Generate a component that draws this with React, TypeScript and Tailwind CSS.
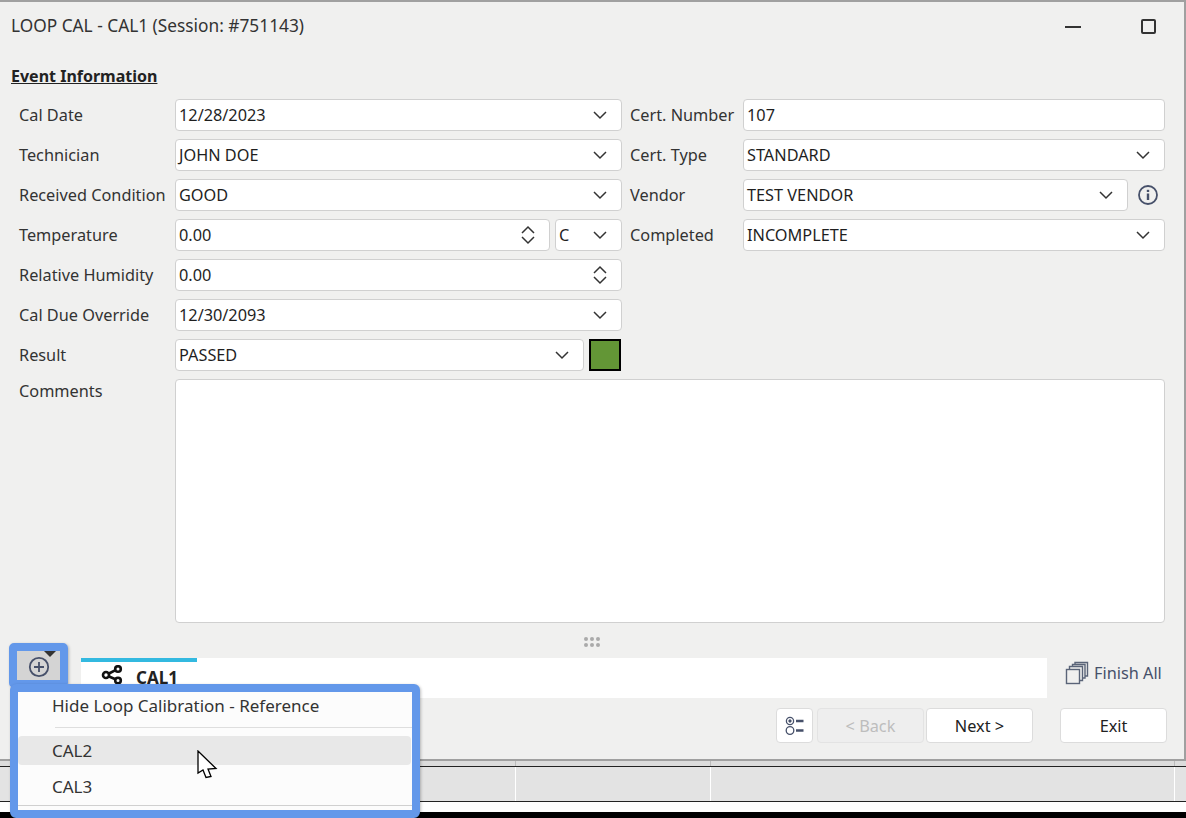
import type { ReactNode } from "react";

const field = "h-[32px] bg-white border border-[#d0d0d0] rounded-[4px] flex items-center pl-[3px] text-[#1f1f1f] min-w-0";

function Chevron() {
  return (
    <svg width="16" height="10" viewBox="0 0 16 10" fill="none" className="shrink-0">
      <path d="M2 2 L8 8 L14 2" stroke="#333" strokeWidth="1.5" />
    </svg>
  );
}

function Spinner() {
  return (
    <svg width="16" height="20" viewBox="0 0 16 20" fill="none" className="shrink-0">
      <path d="M2 8 L8 2 L14 8 M2 12 L8 18 L14 12" stroke="#333" strokeWidth="1.5" />
    </svg>
  );
}

function Select({ value, className = "" }: { value: string; className?: string }) {
  return (
    <div className={`${field} justify-between pr-[13px] ${className}`}>
      <span>{value}</span>
      <Chevron />
    </div>
  );
}

function Spin({ value, className = "" }: { value: string; className?: string }) {
  return (
    <div className={`${field} justify-between pr-[13px] ${className}`}>
      <span>{value}</span>
      <Spinner />
    </div>
  );
}

function Row({ label, children, right }: { label: string; children: ReactNode; right?: ReactNode }) {
  return (
    <div className="flex h-[32px] items-center">
      <div className="w-[156px] shrink-0 text-[#333] whitespace-nowrap">{label}</div>
      <div className="w-[447px] shrink-0 flex items-center">{children}</div>
      {right}
    </div>
  );
}

function Right({ label, children }: { label: string; children: ReactNode }) {
  return (
    <div className="flex items-center flex-1 ml-[8px]">
      <div className="w-[113px] shrink-0 text-[#333] whitespace-nowrap">{label}</div>
      {children}
    </div>
  );
}

function Cursor() {
  return (
    <svg width="22" height="30" viewBox="0 0 22 30" className="absolute left-[196px] top-[750px]">
      <path d="M2 1 L2 23 L7 20 L10 27.5 L15 26.5 L12 19 L20 18.5 Z" fill="#fff" stroke="#000" strokeWidth="1.3" />
    </svg>
  );
}

export default function App() {
  return (
    <div className="relative w-[1186px] h-[818px] overflow-hidden bg-black font-['Noto_Sans',sans-serif] text-[16.3px] leading-[20px]">
      {/* Window */}
      <div className="h-[761px] bg-[#f0f0ef] border-t-2 border-b-2 border-r-2 border-[#a0a0a0] flex flex-col pl-[11px] pr-[19px]">
        <div className="h-[48px] flex items-center justify-between shrink-0">
          <span className="text-[#333] text-[17.3px]">LOOP CAL - CAL1 (Session: #751143)</span>
          <div className="flex items-center gap-[60px] pr-[9px]">
            <div className="w-[16px] h-[2px] bg-[#333] mt-[2px]" />
            <div className="w-[15px] h-[15px] border-2 border-[#333] rounded-[2px]" />
          </div>
        </div>
        <div className="font-bold underline text-[#222] h-[20px] mt-[16px] text-[16px]">Event Information</div>
        <div className="flex flex-col gap-[8px] mt-[13px] pl-[8px]">
          <Row label="Cal Date" right={<Right label="Cert. Number"><div className={`${field} flex-1`}>107</div></Right>}>
            <Select value="12/28/2023" className="w-full" />
          </Row>
          <Row label="Technician" right={<Right label="Cert. Type"><Select value="STANDARD" className="flex-1" /></Right>}>
            <Select value="JOHN DOE" className="w-full" />
          </Row>
          <Row
            label="Received Condition"
            right={
              <Right label="Vendor">
                <Select value="TEST VENDOR" className="flex-1" />
                <svg width="20" height="20" viewBox="0 0 20 20" fill="none" className="ml-[10px] mr-[7px] shrink-0">
                  <circle cx="10" cy="10" r="9" stroke="#46506a" strokeWidth="1.8" />
                  <rect x="8.8" y="8.5" width="2.4" height="6.5" fill="#46506a" />
                  <rect x="8.8" y="4.8" width="2.4" height="2.2" fill="#46506a" />
                </svg>
              </Right>
            }
          >
            <Select value="GOOD" className="w-full" />
          </Row>
          <Row label="Temperature" right={<Right label="Completed"><Select value="INCOMPLETE" className="flex-1" /></Right>}>
            <div className="flex gap-[5px] w-full">
              <Spin value="0.00" className="flex-1" />
              <Select value="C" className="w-[67px]" />
            </div>
          </Row>
          <Row label="Relative Humidity">
            <Spin value="0.00" className="w-full" />
          </Row>
          <Row label="Cal Due Override">
            <Select value="12/30/2093" className="w-full" />
          </Row>
          <Row label="Result">
            <div className="flex gap-[5px] w-full mr-[1px]">
              <Select value="PASSED" className="flex-1" />
              <div className="w-[32px] h-[32px] bg-[#639636] border-2 border-black" />
            </div>
          </Row>
          <div className="flex">
            <div className="w-[156px] shrink-0 text-[#333] pt-[2px]">Comments</div>
            <div className="h-[244px] flex-1 bg-white border border-[#d0d0d0] rounded-[4px]" />
          </div>
        </div>
        {/* Grip */}
        <div className="h-[35px] flex items-center justify-center shrink-0 pt-[3px]">
          <div className="grid grid-cols-3 gap-x-[2px] gap-y-[2px] ml-[8px]">
            {[0, 1, 2, 3, 4, 5].map((i) => (
              <div key={i} className="w-[4px] h-[4px] rounded-full bg-[#aaa]" />
            ))}
          </div>
        </div>
        {/* Tabs */}
        <div className="flex h-[40px] shrink-0">
          <div className="relative w-[43px] h-[29px] mt-[-7px] ml-[6px] pt-[3px] bg-[#d4d4d4] shrink-0 flex items-center justify-center">
            <svg width="22" height="22" viewBox="0 0 22 22" fill="none">
              <circle cx="11" cy="11" r="9.2" stroke="#46506a" strokeWidth="1.8" />
              <path d="M11 6 V16 M6 11 H16" stroke="#46506a" strokeWidth="1.8" />
            </svg>
            <div className="absolute right-[4px] top-0 w-0 h-0 border-l-[6px] border-r-[6px] border-t-[6px] border-l-transparent border-r-transparent border-t-[#333]" />
          </div>
          <div className="ml-[21px] w-[966px] h-[40px] bg-white shrink-0">
            <div className="w-[116px] h-[4px] bg-[#33b9e0]" />
            <div className="flex items-start pl-[20px]">
              <svg width="22" height="20" viewBox="0 0 22 20" fill="none" className="mt-[3px]">
                <circle cx="17" cy="4" r="2.8" stroke="#111" strokeWidth="2.6" />
                <circle cx="5" cy="10" r="3" stroke="#111" strokeWidth="2.6" />
                <circle cx="17" cy="15.5" r="2.8" stroke="#111" strokeWidth="2.6" />
                <path d="M8 8.5 L14.5 5.2 M8 11.5 L14.5 14.3" stroke="#111" strokeWidth="2.6" />
              </svg>
              <span className="font-bold text-[#222] text-[17px] ml-[13px] mt-[6px]">CAL1</span>
            </div>
          </div>
          <div className="flex self-start items-center gap-[5px] ml-[18px] mt-[3px] text-[#46506a] whitespace-nowrap">
            <svg width="24" height="24" viewBox="0 0 24 24" fill="none" stroke="#5a6478" strokeWidth="1.4" className="shrink-0">
              <rect x="1.5" y="8.5" width="13" height="14" fill="#f0f0ef" />
              <path d="M4.5 8.5 V5.5 H17.5 V19.5 H14.5 M7.5 5.5 V3.5 H20 V17 H17.5 M10 3.5 V1.5 H22.5 V15 H20" />
            </svg>
            Finish All
          </div>
        </div>
        {/* Footer buttons */}
        <div className="flex items-start mt-[10px] ml-[765px]">
          <div className="w-[37px] h-[35px] bg-white rounded-[4px] border border-[#dcdcdc] flex items-center justify-center shrink-0">
            <svg width="20" height="20" viewBox="0 0 20 20" fill="none" stroke="#46506a">
              <circle cx="5" cy="5" r="3.6" strokeWidth="1.3" />
              <circle cx="5" cy="5" r="1.2" fill="#46506a" />
              <circle cx="5" cy="14.5" r="3.8" strokeWidth="1.3" />
              <path d="M11 5 H18.5 M11 14.5 H18.5" strokeWidth="2.5" />
            </svg>
          </div>
          <div className="ml-[4px] w-[107px] h-[35px] rounded-[4px] border border-[#e3e3e3] bg-[#eeeeee] flex items-center justify-center text-[#bdbdbd] shrink-0">&lt; Back</div>
          <div className="ml-[2px] w-[107px] h-[35px] rounded-[4px] border border-[#dcdcdc] bg-white flex items-center justify-center text-[#222] shrink-0">Next &gt;</div>
          <div className="ml-[27px] w-[107px] h-[35px] rounded-[4px] border border-[#dcdcdc] bg-white flex items-center justify-center text-[#222] shrink-0">Exit</div>
        </div>
      </div>

      {/* Background grid behind window */}
      <div className="h-[5px] bg-[#dcdcdc] flex">
        <div className="w-[516px] border-r border-[#bbbbbb]" />
        <div className="w-[195px] border-r border-[#bbbbbb]" />
        <div className="w-[464px] border-r border-[#bbbbbb]" />
      </div>
      <div className="h-[36px] bg-[#e3e3e3] border-y border-[#222] flex">
        <div className="w-[516px] border-r border-white" />
        <div className="w-[195px] border-r border-white" />
        <div className="w-[464px] border-r border-white" />
      </div>
      <div className="h-[10px] bg-white" />

      {/* Highlight around add button */}
      <div className="absolute left-[9px] top-[643px] w-[59px] h-[45px] border-[8px] border-[#6398ea] rounded-[5px] shadow-[1px_1px_3px_rgba(0,0,0,0.25)]" />

      {/* Dropdown menu */}
      <div className="absolute left-[10px] top-[684px] w-[410px] h-[134px] bg-[#fcfcfc] border-[8px] border-[#6398ea] rounded-[6px] text-[#333] text-[17px] shadow-[1px_1px_3px_rgba(0,0,0,0.25)]">
        <div className="pl-[34px] h-[26px] flex items-center mt-[1px]">Hide Loop Calibration - Reference</div>
        <div className="ml-[37px] h-px bg-[#dedede] mt-[8px]" />
        <div className="mt-[8px] h-[29px] bg-[#e8e8e8] rounded-[4px] pl-[34px] flex items-center mr-[1px]">CAL2</div>
        <div className="mt-[7px] h-[29px] pl-[34px] flex items-center">CAL3</div>
        <div className="h-px bg-[#d0d0d0] mt-[4px]" />
      </div>
      <Cursor />
    </div>
  );
}
